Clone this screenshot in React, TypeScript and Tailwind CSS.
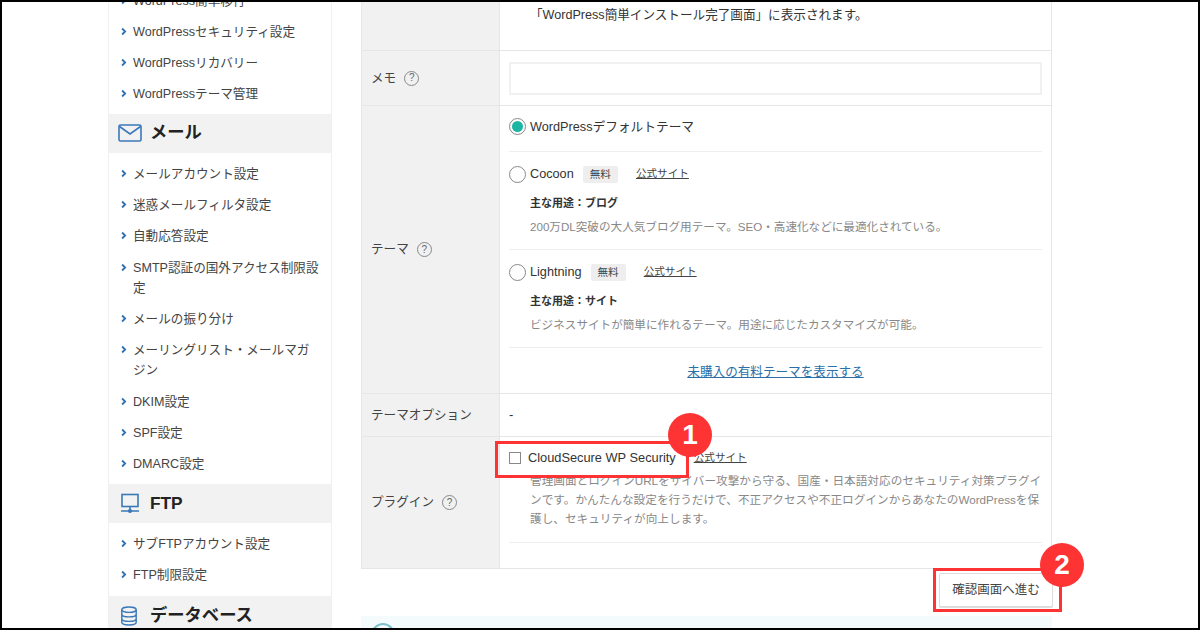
const font = { fontFamily: '"Liberation Sans", "Noto Sans CJK JP", sans-serif' };

function NavItem({ label }: { label: string }) {
  return (
    <li className="flex pl-[12px] pr-[10.5px] pt-[6.65px] pb-[4.65px] text-[12.6px] leading-[20px] text-[#444]">
      <svg viewBox="0 0 8 10" className="mt-[5px] mr-[6px] h-[9px] w-[6px] shrink-0" fill="none" stroke="#2f6fb0" strokeWidth="2.4">
        <path d="M1.5 1l4 4-4 4" />
      </svg>
      <span>{label}</span>
    </li>
  );
}

function NavHead({ icon, label }: { icon: React.ReactNode; label: string }) {
  return (
    <div className="flex h-[39px] items-center bg-[#f2f2f2] pl-[9px] text-[17.3px] font-bold text-[#222]">
      <span className="flex w-[32px] shrink-0 justify-start">{icon}</span>
      <span>{label}</span>
    </div>
  );
}

function Help() {
  return (
    <span className="ml-[8px] inline-flex h-[15px] w-[15px] items-center justify-center rounded-full border border-[#888] text-[10px] leading-none text-[#666]">?</span>
  );
}

function Label({ children, help }: { children?: React.ReactNode; help?: boolean }) {
  return (
    <div className="flex w-[138px] shrink-0 items-center border-r border-[#e6e6e6] bg-[#f1f1f1] pl-[9px] text-[12.6px] text-[#444]">
      <span>{children}</span>
      {help && <Help />}
    </div>
  );
}

function Radio({ on }: { on?: boolean }) {
  return (
    <span className="mr-[4px] flex h-[17px] w-[17px] shrink-0 items-center justify-center rounded-full border border-[#888] bg-white">
      {on && <span className="h-[11px] w-[11px] rounded-full bg-[#1cb5a3]" />}
    </span>
  );
}

function Theme({ name, purpose, desc }: { name: string; purpose: string; desc: string }) {
  return (
    <div className="border-b border-[#eeeeee] pt-[12px] pb-[12px]">
      <div className="flex h-[20px] items-center text-[12.7px] text-[#333]">
        <Radio />
        <span className="mt-[2px]">{name}</span>
        <span className="ml-[9px] rounded-[2px] bg-[#eeeeee] px-[7px] py-[1px] text-[10.6px] leading-[15px] text-[#444]">無料</span>
        <a className="ml-[18px] text-[10.6px] text-[#444] underline">公式サイト</a>
      </div>
      <p className="mt-[9px] pl-[21px] text-[11px] leading-[20px] font-bold text-[#333]">主な用途：{purpose}</p>
      <p className="mt-[4px] pl-[21px] text-[11.6px] leading-[20px] text-[#888]">{desc}</p>
    </div>
  );
}

function Badge({ n, className }: { n: string; className: string }) {
  return (
    <span className={`absolute flex h-[44px] w-[44px] items-center justify-center rounded-full bg-[#fe3333] text-[28px] font-bold leading-none text-white ${className}`}>{n}</span>
  );
}

export default function App() {
  return (
    <div style={font} className="relative flex h-[630px] w-[1200px] overflow-hidden border-2 border-black bg-white">
      <aside className="ml-[106px] h-[900px] w-[224px] shrink-0 -mt-[18px] border-x border-[#f0f0f0]">
        <ul className="mb-[4.800px]">
          <NavItem label="WordPress簡単移行" />
          <NavItem label="WordPressセキュリティ設定" />
          <NavItem label="WordPressリカバリー" />
          <NavItem label="WordPressテーマ管理" />
        </ul>
        <NavHead
          label="メール"
          icon={
            <svg viewBox="0 0 24 18" className="h-[18px] w-[24px]" fill="none" stroke="#3b78b8" strokeWidth="1.6">
              <rect x="1" y="1" width="22" height="16" rx="1.5" />
              <path d="M1.5 2.500L12 10l10.500-7.500" />
            </svg>
          }
        />
        <ul className="mt-[4.300px] mb-[5.500px]">
          <NavItem label="メールアカウント設定" />
          <NavItem label="迷惑メールフィルタ設定" />
          <NavItem label="自動応答設定" />
          <NavItem label="SMTP認証の国外アクセス制限設定" />
          <NavItem label="メールの振り分け" />
          <NavItem label="メーリングリスト・メールマガジン" />
          <NavItem label="DKIM設定" />
          <NavItem label="SPF設定" />
          <NavItem label="DMARC設定" />
        </ul>
        <NavHead
          label="FTP"
          icon={
            <svg viewBox="0 0 20 20" className="ml-[2px] h-[21px] w-[20px]" fill="none" stroke="#3b78b8" strokeWidth="1.6">
              <rect x="2" y="1" width="16" height="12" />
              <path d="M10 13v4M1 17.500h18" />
              <circle cx="10" cy="17.500" r="1.300" fill="#3b78b8" />
            </svg>
          }
        />
        <ul className="mt-[4.300px] mb-[6px]">
          <NavItem label="サブFTPアカウント設定" />
          <NavItem label="FTP制限設定" />
        </ul>
        <NavHead
          label="データベース"
          icon={
            <svg viewBox="0 0 20 22" className="ml-[2px] h-[22px] w-[18px]" fill="none" stroke="#3b78b8" strokeWidth="1.6">
              <ellipse cx="10" cy="4" rx="8" ry="3" />
              <path d="M2 4v14c0 1.700 3.600 3 8 3s8-1.300 8-3V4M2 9c0 1.700 3.600 3 8 3s8-1.300 8-3M2 14c0 1.700 3.600 3 8 3s8-1.300 8-3" />
            </svg>
          }
        />
      </aside>

      <main className="ml-[29px] w-[691px] shrink-0 -mt-[2px]">
        <div className="border-x border-b border-[#e6e6e6]">
          <div className="flex h-[51px] border-b border-[#e6e6e6]">
            <Label />
            <p className="pl-[30px] pt-[5px] text-[12.6px] leading-[20px] text-[#333]">「WordPress簡単インストール完了画面」に表示されます。</p>
          </div>
          <div className="flex h-[55px] border-b border-[#e6e6e6]">
            <Label help>メモ</Label>
            <div className="flex-1 pl-[9px] pr-[9px] pt-[11px]">
              <div className="h-[33px] border-2 border-[#f1f1f1] bg-white" />
            </div>
          </div>
          <div className="flex h-[288px] border-b border-[#e6e6e6]">
            <Label help>テーマ</Label>
            <div className="flex-1 pl-[9px] pr-[9px]">
              <div className="flex h-[46px] items-center border-b border-[#eeeeee] pb-[4px] text-[12.7px] text-[#333]">
                <Radio on />
                <span className="mt-[2px]">WordPressデフォルトテーマ</span>
              </div>
              <Theme name="Cocoon" purpose="ブログ" desc="200万DL突破の大人気ブログ用テーマ。SEO・高速化などに最適化されている。" />
              <Theme name="Lightning" purpose="サイト" desc="ビジネスサイトが簡単に作れるテーマ。用途に応じたカスタマイズが可能。" />
              <p className="pt-[14px] text-center text-[12.6px] leading-[20px] text-[#2a6fa8] underline">未購入の有料テーマを表示する</p>
            </div>
          </div>
          <div className="flex h-[43px] border-b border-[#e6e6e6]">
            <Label>テーマオプション</Label>
            <p className="flex items-center pl-[9px] text-[13px] text-[#333]">-</p>
          </div>
          <div className="flex h-[131px]">
            <Label help>プラグイン</Label>
            <div className="flex-1 pl-[9px] pr-[9px]">
              <div className="border-b border-[#eeeeee] pb-[14px]">
                <div className="flex h-[42px] items-center text-[12.8px] text-[#333]">
                  <span className="mr-[7px] h-[12px] w-[12px] border border-[#888] bg-white" />
                  <span>CloudSecure WP Security</span>
                  <a className="ml-[18px] text-[10.6px] text-[#444] underline">公式サイト</a>
                </div>
                <p className="-mt-[8px] pl-[21px] text-[11.650px] leading-[19px] text-[#888]">管理画面とログインURLをサイバー攻撃から守る、国産・日本語対応のセキュリティ対策プラグインです。かんたんな設定を行うだけで、不正アクセスや不正ログインからあなたのWordPressを保護し、セキュリティが向上します。</p>
              </div>
            </div>
          </div>
        </div>
        <div className="flex justify-end pt-[4px]">
          <button className="mr-[-1px] h-[34px] w-[114px] rounded-[2px] border border-[#ddd] bg-white text-[12.500px] text-[#444] shadow-[0_1px_1px_rgba(0,0,0,0.15)]">確認画面へ進む</button>
        </div>
        <div className="mt-[9px] h-[40px] bg-[#f3fbfd] pl-[10px] pt-[7px]">
          <div className="h-[24px] w-[24px] rounded-full border-2 border-[#7cc0cc]" />
        </div>
      </main>

      <div className="absolute left-[493px] top-[439px] h-[37px] w-[194px] border-[3px] border-[#fe3333]" />
      <Badge n="1" className="left-[666px] top-[411px]" />
      <div className="absolute left-[931px] top-[566px] h-[44px] w-[129px] border-[3px] border-[#fe3333]" />
      <Badge n="2" className="left-[1038px] top-[541px]" />
    </div>
  );
}
